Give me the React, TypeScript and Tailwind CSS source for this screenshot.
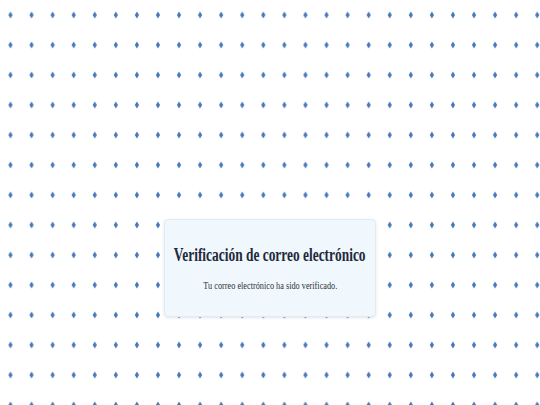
import React from 'react';

function DotGrid() {
  return (
    <svg className="absolute inset-0 h-full w-full" aria-hidden="true">
      <defs>
        <pattern id="dots" x="0" y="0" width="21.07" height="30" patternUnits="userSpaceOnUse">
          <path d="M10.5 11.6 L12.6 15 L10.5 18.4 L8.4 15 Z" fill="#4778bc" />
        </pattern>
      </defs>
      <rect width="100%" height="100%" fill="url(#dots)" />
    </svg>
  );
}

export default function App() {
  return (
    <div className="relative h-[405px] w-full overflow-hidden bg-white">
      <DotGrid />
      <div className="relative mx-auto mt-[219px] w-[212px] rounded-[4px] border border-[#e2eaf3] bg-[#f0f7fd] pt-[21px] pb-[23px] shadow-[0_1px_3px_rgba(30,50,80,0.12)]">
        <div className="flex justify-center" style={{ fontFamily: '"Liberation Serif", "Times New Roman", serif' }}>
          <h1 className="origin-center scale-x-[0.745] whitespace-nowrap text-[18px] leading-[28px] font-bold text-[#1e2a3b]">
            Verificación de correo electrónico
          </h1>
        </div>
        <div className="mt-2 flex justify-center" style={{ fontFamily: '"Liberation Serif", "Times New Roman", serif' }}>
          <p className="origin-center scale-x-[0.75] whitespace-nowrap text-[11px] leading-[16px] text-[#2f343c]">
            Tu correo electrónico ha sido verificado.
          </p>
        </div>
      </div>
    </div>
  );
}
